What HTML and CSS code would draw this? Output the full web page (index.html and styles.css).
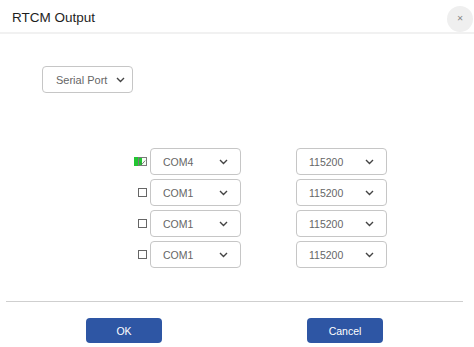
FILE: index.html
```html
<!DOCTYPE html>
<html lang="en">
<head>
    <meta charset="UTF-8">
    <title>RTCM Output</title>
    <link rel="stylesheet" href="styles.css">
</head>
<body>
    <div class="dialog">
        <div class="dialog-header">
            <span class="title">RTCM Output</span>
            <button class="close">&#x2715;</button>
        </div>

        <div class="dialog-body">
            <div class="select port-type">
                <span>Serial Port</span>
                <svg class="chevron" width="9" height="6" viewBox="0 0 9 6"><path d="M1 1 L4.5 4.5 L8 1" fill="none" stroke="#444" stroke-width="1.4"/></svg>
            </div>

            <div class="port-list">
                <div class="port-row">
                    <span class="check checked">
                        <svg width="9" height="9" viewBox="0 0 9 9"><path d="M1.5 4.5 L3.8 6.8 L8 2" fill="none" stroke="#555" stroke-width="1"/></svg>
                    </span>
                    <div class="select port">
                        <span>COM4</span>
                        <svg class="chevron" width="9" height="6" viewBox="0 0 9 6"><path d="M1 1 L4.5 4.5 L8 1" fill="none" stroke="#444" stroke-width="1.4"/></svg>
                    </div>
                    <div class="select baud">
                        <span>115200</span>
                        <svg class="chevron" width="9" height="6" viewBox="0 0 9 6"><path d="M1 1 L4.5 4.5 L8 1" fill="none" stroke="#444" stroke-width="1.4"/></svg>
                    </div>
                </div>
                <div class="port-row">
                    <span class="check"></span>
                    <div class="select port">
                        <span>COM1</span>
                        <svg class="chevron" width="9" height="6" viewBox="0 0 9 6"><path d="M1 1 L4.5 4.5 L8 1" fill="none" stroke="#444" stroke-width="1.4"/></svg>
                    </div>
                    <div class="select baud">
                        <span>115200</span>
                        <svg class="chevron" width="9" height="6" viewBox="0 0 9 6"><path d="M1 1 L4.5 4.5 L8 1" fill="none" stroke="#444" stroke-width="1.4"/></svg>
                    </div>
                </div>
                <div class="port-row">
                    <span class="check"></span>
                    <div class="select port">
                        <span>COM1</span>
                        <svg class="chevron" width="9" height="6" viewBox="0 0 9 6"><path d="M1 1 L4.5 4.5 L8 1" fill="none" stroke="#444" stroke-width="1.4"/></svg>
                    </div>
                    <div class="select baud">
                        <span>115200</span>
                        <svg class="chevron" width="9" height="6" viewBox="0 0 9 6"><path d="M1 1 L4.5 4.5 L8 1" fill="none" stroke="#444" stroke-width="1.4"/></svg>
                    </div>
                </div>
                <div class="port-row">
                    <span class="check"></span>
                    <div class="select port">
                        <span>COM1</span>
                        <svg class="chevron" width="9" height="6" viewBox="0 0 9 6"><path d="M1 1 L4.5 4.5 L8 1" fill="none" stroke="#444" stroke-width="1.4"/></svg>
                    </div>
                    <div class="select baud">
                        <span>115200</span>
                        <svg class="chevron" width="9" height="6" viewBox="0 0 9 6"><path d="M1 1 L4.5 4.5 L8 1" fill="none" stroke="#444" stroke-width="1.4"/></svg>
                    </div>
                </div>
            </div>
        </div>

        <div class="dialog-footer">
            <button class="btn">OK</button>
            <button class="btn">Cancel</button>
        </div>
    </div>
</body>
</html>
```

FILE: styles.css
```css
body {
    margin: 0;
    padding: 0;
    background: #fff;
    font-family: 'Liberation Sans', Arial, sans-serif;
    color: #222;
}
.dialog {
    width: 474px;
    height: 347px;
    display: flex;
    flex-direction: column;
}
.dialog-header {
    height: 32px;
    display: flex;
    align-items: center;
    justify-content: space-between;
    padding: 0 1px 0 12px;
    border-bottom: 2px solid #f1f1f1;
}
.title {
    font-size: 13.5px;
    color: #1e1e1e;
    padding-top: 2px;
}
.close {
    width: 26px;
    height: 26px;
    margin-top: 5px;
    border: none;
    border-radius: 50%;
    background: #efefef;
    color: #8a8a8a;
    font-size: 8px;
    padding: 0;
    font-family: 'DejaVu Sans', sans-serif;
}
.dialog-body {
    flex: 1;
    padding: 32px 0 0 0;
}
.select {
    height: 27px;
    box-sizing: border-box;
    border: 1px solid #c6c6c6;
    border-radius: 4px;
    display: flex;
    align-items: center;
    justify-content: space-between;
    padding: 0 12px 0 12px;
    font-size: 10.5px;
    color: #666;
    background: #fff;
}
.port-type {
    width: 91px;
    margin-left: 42px;
    font-size: 11px;
    padding-left: 13px;
    padding-right: 7px;
}
.chevron {
    flex: none;
}
.port-list {
    margin-top: 55px;
    display: flex;
    flex-direction: column;
    gap: 4px;
}
.port-row {
    display: flex;
    align-items: center;
    padding-left: 138px;
}
.check {
    width: 9px;
    height: 9px;
    border: 1px solid #666;
    box-sizing: border-box;
    margin-right: 3px;
    display: flex;
}
.check.checked {
    border-color: #7a7a7a;
    background: linear-gradient(to right, #22c632 0, #22c632 3px, #f4fff4 3px);
    box-shadow: -4px 0 0 #22c632;
}
.port {
    width: 91px;
}
.baud {
    width: 91px;
    margin-left: 55px;
}
.dialog-footer {
    border-top: 1px solid #cfcfcf;
    margin: 0 11px 0 6px;
    height: 46px;
    display: flex;
    align-items: flex-start;
    padding: 16px 0 0 80px;
    box-sizing: border-box;
    gap: 145px;
}
.btn {
    width: 76px;
    height: 25px;
    border: none;
    border-radius: 4px;
    background: #2e56a4;
    color: #fff;
    font-family: 'Liberation Sans', Arial, sans-serif;
    font-size: 10.5px;
}
```
